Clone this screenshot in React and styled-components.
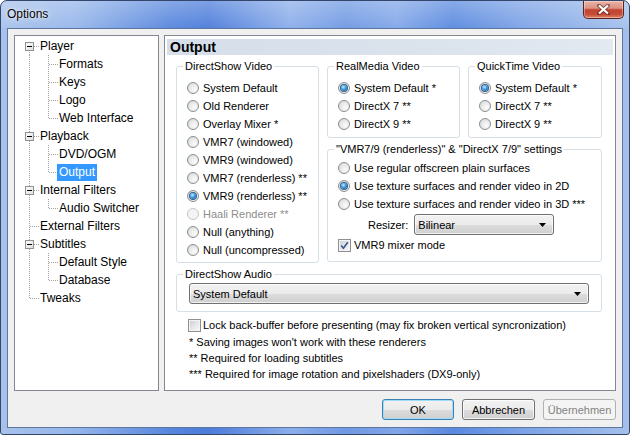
import React from "react";
import styled, { createGlobalStyle } from "styled-components";

const GlobalStyle = createGlobalStyle`
  html, body {
    margin: 0;
    padding: 0;
    background: #ffffff;
  }
  body {
    font-family: "Liberation Sans", Arial, sans-serif;
    font-size: 11px;
    color: #000;
  }
`;

const Window = styled.div`
  width: 630px;
  height: 435px;
  box-sizing: border-box;
  border: 1px solid #34466b;
  border-radius: 7px 7px 3px 3px;
  overflow: hidden;
  display: flex;
  flex-direction: column;
  background:
    linear-gradient(180deg, rgba(255, 255, 255, 0.28) 0px, rgba(255, 255, 255, 0.06) 26px, rgba(255, 255, 255, 0) 27px),
    linear-gradient(90deg, #a7c2eb 0%, #95b5ea 12%, #5786dd 27%, #4b7cda 33%, #8badea 46%, #6f99e3 55%, #81a6e8 63%, #5989df 72%, #7ca2e6 83%, #a4c0eb 100%);
`;

const TitleBar = styled.div`
  height: 27px;
  flex: none;
  display: flex;
  align-items: flex-start;
`;

const Title = styled.span`
  margin: 6px 0 0 6px;
  font-size: 12px;
  line-height: 14px;
  color: #000;
  text-shadow: 0 0 6px rgba(255, 255, 255, 0.9), 0 0 2px rgba(255, 255, 255, 0.8);
`;

const CloseButton = styled.div`
  margin-left: auto;
  margin-right: 5px;
  width: 41px;
  height: 18px;
  box-sizing: border-box;
  border: 1px solid #5b231f;
  border-top: none;
  border-radius: 0 0 5px 5px;
  background: linear-gradient(180deg, #e9b3a6 0%, #dc9282 42%, #c3432f 52%, #c64c36 78%, #df8466 100%);
  box-shadow: inset 0 0 0 1px rgba(255, 255, 255, 0.35);
  display: flex;
  align-items: center;
  justify-content: center;
`;

const Client = styled.div`
  flex: 1;
  margin: 0 6px 6px;
  border: 1px solid #60769c;
  background: #f0f0f0;
  display: flex;
  flex-direction: column;
  padding: 6px 6px 7px 6px;
`;

const Body = styled.div`
  height: 356px;
  display: flex;
  gap: 5px;
`;

const TreeBox = styled.div`
  width: 145px;
  flex: none;
  box-sizing: border-box;
  border: 1px solid #828790;
  background: #fff;
  padding: 1px 0 0 5px;
  font-size: 12px;
`;

const TreeRow = styled.div`
  display: flex;
  align-items: center;
  height: 18px;
`;

const TreeLabel = styled.span`
  margin-left: -1px;
  padding: 0 2px;
  height: 17px;
  line-height: 17px;
  white-space: nowrap;
  background: ${(p) => (p.$selected ? "#3399ff" : "transparent")};
  color: ${(p) => (p.$selected ? "#fff" : "#000")};
`;

const Panel = styled.div`
  flex: 1;
  box-sizing: border-box;
  border: 1px solid #828790;
  background: #fff;
  padding: 3px 2px 0;
`;

const PanelHeader = styled.div`
  height: 16px;
  line-height: 16px;
  padding-left: 3px;
  font-size: 14px;
  font-weight: bold;
  background: linear-gradient(90deg, #d5dee9 0%, #dbe3ed 60%, #e3e9f1 100%);
`;

const PanelContent = styled.div`
  padding: 5px 11px 0 9px;
`;

const TopGrid = styled.div`
  display: grid;
  grid-template-columns: 143px 1fr;
  gap: 8px;
`;

const RightColumn = styled.div`
  display: flex;
  flex-direction: column;
  gap: 5px;
`;

const Pair = styled.div`
  display: grid;
  grid-template-columns: 133px 1fr;
  gap: 8px;
`;

/* Vista style group box: caption sits on the top border */
const Group = styled.div`
  margin-top: ${(p) => (p.$mt || 0) + 6}px;
  border: 1px solid #d5dfe5;
  border-radius: 3px;
  display: flex;
  flex-direction: column;
`;

const Caption = styled.span`
  align-self: flex-start;
  margin: -7px 0 0 6px;
  padding: 0 2px;
  line-height: 13px;
  background: #fff;
  white-space: nowrap;
`;

const GroupBody = styled.div`
  padding: ${(p) => p.$pad || "6px 8px 4px 10px"};
`;

const OptionRow = styled.div`
  display: flex;
  align-items: center;
  gap: ${(p) => p.$gap || 4}px;
  height: ${(p) => p.$h || 18}px;
  white-space: nowrap;
  color: ${(p) => (p.$disabled ? "#8d8d8d" : "#000")};
`;

const RadioDot = styled.span`
  width: 12px;
  height: 12px;
  flex: none;
  box-sizing: border-box;
  border-radius: 50%;
  border: 1px solid ${(p) => (p.$disabled ? "#c4c6c9" : "#8c8e91")};
  background: ${(p) =>
    p.$disabled
      ? "#f4f4f4"
      : "radial-gradient(circle at 65% 65%, #fbfbfb 0%, #ebebeb 45%, #cdd1d6 100%)"};
  display: flex;
  align-items: center;
  justify-content: center;

  &::after {
    content: "";
    display: ${(p) => (p.$checked ? "block" : "none")};
    width: 6px;
    height: 6px;
    border-radius: 50%;
    background: radial-gradient(circle at 40% 35%, #c6ecfd 0%, #3a9ae0 45%, #144c86 100%);
    box-shadow: 0 0 0 1px #2f5f91;
  }
`;

const CheckSquare = styled.span`
  width: 13px;
  height: 13px;
  flex: none;
  box-sizing: border-box;
  border: 1px solid #8e8f8f;
  background: #f4f4f4;
  padding: 1px;
  display: flex;

  & > span {
    flex: 1;
    background: linear-gradient(135deg, #cdd1d6 0%, #e6e7e8 55%, #f7f7f7 100%);
    display: flex;
    align-items: center;
    justify-content: center;
  }
`;

const ResizerLabel = styled.span`
  margin-left: 30px;
`;

const Combo = styled.div`
  width: ${(p) => (p.$w ? `${p.$w}px` : "auto")};
  flex: ${(p) => (p.$w ? "none" : 1)};
  height: 21px;
  box-sizing: border-box;
  border: 1px solid #707070;
  border-radius: 3px;
  background: linear-gradient(180deg, #f2f2f2 0%, #ebebeb 50%, #dddddd 51%, #cfcfcf 100%);
  box-shadow: inset 0 0 0 1px rgba(255, 255, 255, 0.7);
  display: flex;
  align-items: center;
  padding: 0 7px 0 3px;
  font-size: 11px;

  & > span {
    flex: 1;
  }
`;

const LockRow = styled(OptionRow)`
  margin-top: 4px;
  padding-left: 12px;
  gap: 2px;
`;

const Note = styled.div`
  height: 16px;
  line-height: 16px;
  padding-left: 13px;
  white-space: nowrap;
`;

const ButtonRow = styled.div`
  margin-top: 8px;
  display: flex;
  justify-content: flex-end;
  gap: 8px;
`;

const Button = styled.div`
  width: ${(p) => p.$w}px;
  height: 21px;
  box-sizing: border-box;
  border: 1px solid ${(p) => (p.$default ? "#3c7fb1" : p.$disabled ? "#adb2b5" : "#707070")};
  border-radius: 3px;
  background: ${(p) =>
    p.$disabled
      ? "#f4f4f4"
      : "linear-gradient(180deg, #f2f2f2 0%, #ebebeb 50%, #dddddd 51%, #cfcfcf 100%)"};
  box-shadow: inset 0 0 0 1px ${(p) => (p.$default ? "#9fdcf7" : p.$disabled ? "#f4f4f4" : "rgba(255,255,255,0.75)")};
  color: ${(p) => (p.$disabled ? "#838383" : "#000")};
  display: flex;
  align-items: center;
  justify-content: center;
  font-size: 11px;
`;

const treeItems = [
  { label: "Player", cells: ["first"], box: true },
  { label: "Formats", cells: ["line", "tee"] },
  { label: "Keys", cells: ["line", "tee"] },
  { label: "Logo", cells: ["line", "tee"] },
  { label: "Web Interface", cells: ["line", "ell"] },
  { label: "Playback", cells: ["tee"], box: true },
  { label: "DVD/OGM", cells: ["line", "tee"] },
  { label: "Output", cells: ["line", "ell"], selected: true },
  { label: "Internal Filters", cells: ["tee"], box: true },
  { label: "Audio Switcher", cells: ["line", "ell"] },
  { label: "External Filters", cells: ["tee"] },
  { label: "Subtitles", cells: ["tee"], box: true },
  { label: "Default Style", cells: ["line", "tee"] },
  { label: "Database", cells: ["line", "ell"] },
  { label: "Tweaks", cells: ["ell"] },
];

function Connector({ kind, box }) {
  const y1 = kind === "first" ? 9 : 0;
  const y2 = kind === "ell" ? 10 : 18;
  return (
    <svg width="19" height="18" viewBox="0 0 19 18" shapeRendering="crispEdges" style={{ flex: "none" }}>
      <line x1="9.5" y1={y1} x2="9.5" y2={y2} stroke="#a0a0a0" strokeDasharray="1 1" />
      {kind !== "line" && (
        <line x1="10" y1="9.5" x2="19" y2="9.5" stroke="#a0a0a0" strokeDasharray="1 1" />
      )}
      {box && (
        <g>
          <defs>
            <linearGradient id="boxfill" x1="0" y1="0" x2="1" y2="1">
              <stop offset="0" stopColor="#ffffff" />
              <stop offset="1" stopColor="#dcdcdc" />
            </linearGradient>
          </defs>
          <rect x="5.5" y="5.5" width="8" height="8" fill="url(#boxfill)" stroke="#919191" />
          <line x1="7" y1="9.5" x2="12" y2="9.5" stroke="#000" />
        </g>
      )}
    </svg>
  );
}

function Radio({ label, checked, disabled }) {
  return (
    <OptionRow $disabled={disabled}>
      <RadioDot $checked={checked} $disabled={disabled} />
      <span>{label}</span>
    </OptionRow>
  );
}

function CheckBox({ checked }) {
  return (
    <CheckSquare>
      <span>
        {checked && (
          <svg width="9" height="9" viewBox="0 0 9 9">
            <path d="M1.2 4.6 L3.4 7.2 L7.8 1.2" fill="none" stroke="#3a5590" strokeWidth="1.6" />
          </svg>
        )}
      </span>
    </CheckSquare>
  );
}

function ComboArrow() {
  return (
    <svg width="7" height="4" viewBox="0 0 7 4">
      <path d="M0 0 H7 L3.5 4 Z" fill="#000" />
    </svg>
  );
}

function GroupBox({ title, mt, pad, children }) {
  return (
    <Group $mt={mt}>
      <Caption>{title}</Caption>
      <GroupBody $pad={pad}>{children}</GroupBody>
    </Group>
  );
}

const dsVideo = [
  { label: "System Default" },
  { label: "Old Renderer" },
  { label: "Overlay Mixer *" },
  { label: "VMR7 (windowed)" },
  { label: "VMR9 (windowed)" },
  { label: "VMR7 (renderless) **" },
  { label: "VMR9 (renderless) **", checked: true },
  { label: "Haali Renderer **", disabled: true },
  { label: "Null (anything)" },
  { label: "Null (uncompressed)" },
];

const dxOptions = [
  { label: "System Default *", checked: true },
  { label: "DirectX 7 **" },
  { label: "DirectX 9 **" },
];

const surfaces = [
  { label: "Use regular offscreen plain surfaces" },
  { label: "Use texture surfaces and render video in 2D", checked: true },
  { label: "Use texture surfaces and render video in 3D ***" },
];

export default function App() {
  return (
    <>
      <GlobalStyle />
      <Window>
        <TitleBar>
          <Title>Options</Title>
          <CloseButton>
            <svg width="13" height="11" viewBox="0 0 13 11">
              <path
                d="M2 1.5 L11 9.5 M11 1.5 L2 9.5"
                stroke="#4a1a16"
                strokeWidth="4"
                strokeLinecap="round"
                opacity="0.55"
              />
              <path d="M2 1.5 L11 9.5 M11 1.5 L2 9.5" stroke="#ffffff" strokeWidth="2.2" />
            </svg>
          </CloseButton>
        </TitleBar>
        <Client>
          <Body>
            <TreeBox>
              {treeItems.map((item) => (
                <TreeRow key={item.label}>
                  {item.cells.map((c, i) => (
                    <Connector key={i} kind={c} box={item.box && i === item.cells.length - 1} />
                  ))}
                  <TreeLabel $selected={item.selected}>{item.label}</TreeLabel>
                </TreeRow>
              ))}
            </TreeBox>
            <Panel>
              <PanelHeader>Output</PanelHeader>
              <PanelContent>
                <TopGrid>
                  <GroupBox title="DirectShow Video" pad="6px 8px 3px 10px">
                    {dsVideo.map((o) => (
                      <Radio key={o.label} {...o} />
                    ))}
                  </GroupBox>
                  <RightColumn>
                    <Pair>
                      <GroupBox title="RealMedia Video">
                        {dxOptions.map((o) => (
                          <Radio key={o.label} {...o} />
                        ))}
                      </GroupBox>
                      <GroupBox title="QuickTime Video">
                        {dxOptions.map((o) => (
                          <Radio key={o.label} {...o} />
                        ))}
                      </GroupBox>
                    </Pair>
                    <GroupBox title={'"VMR7/9 (renderless)" & "DirectX 7/9" settings'} pad="3px 8px 7px 10px">
                      {surfaces.map((o) => (
                        <Radio key={o.label} {...o} />
                      ))}
                      <OptionRow $h={23} $gap={6}>
                        <ResizerLabel>Resizer:</ResizerLabel>
                        <Combo $w={140}>
                          <span>Bilinear</span>
                          <ComboArrow />
                        </Combo>
                      </OptionRow>
                      <OptionRow $gap={3}>
                        <CheckBox checked />
                        <span>VMR9 mixer mode</span>
                      </OptionRow>
                    </GroupBox>
                  </RightColumn>
                </TopGrid>
                <GroupBox title="DirectShow Audio" mt={5} pad="2px 12px 7px 12px">
                  <OptionRow $h={21}>
                    <Combo>
                      <span>System Default</span>
                      <ComboArrow />
                    </Combo>
                  </OptionRow>
                </GroupBox>
                <LockRow>
                  <CheckBox />
                  <span>Lock back-buffer before presenting (may fix broken vertical syncronization)</span>
                </LockRow>
                <Note>* Saving images won't work with these renderers</Note>
                <Note>** Required for loading subtitles</Note>
                <Note>*** Required for image rotation and pixelshaders (DX9-only)</Note>
              </PanelContent>
            </Panel>
          </Body>
          <ButtonRow>
            <Button $w={72} $default>OK</Button>
            <Button $w={73}>Abbrechen</Button>
            <Button $w={73} $disabled>Übernehmen</Button>
          </ButtonRow>
        </Client>
      </Window>
    </>
  );
}
